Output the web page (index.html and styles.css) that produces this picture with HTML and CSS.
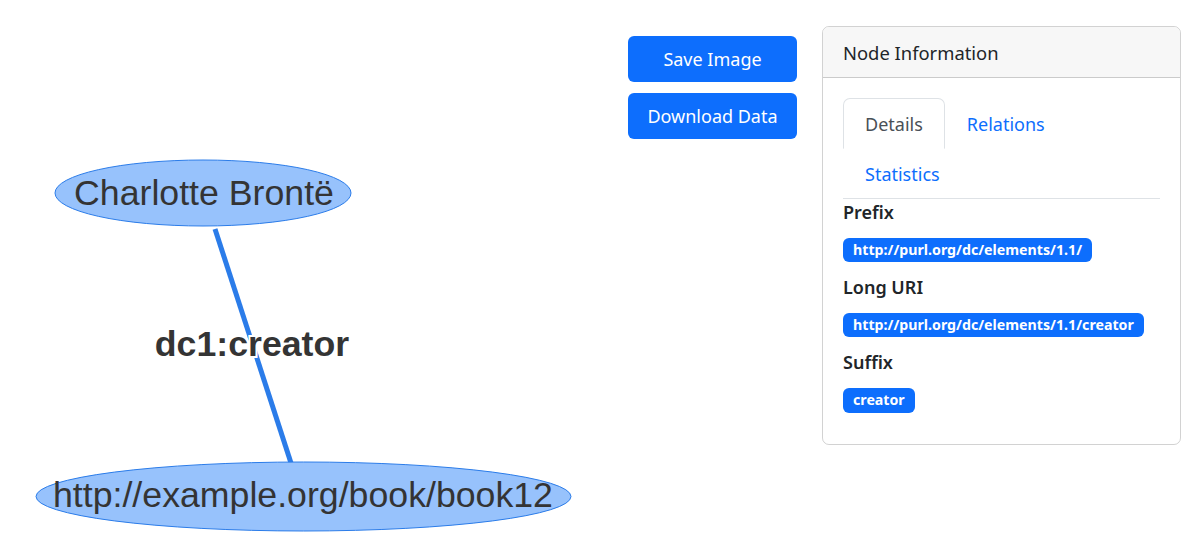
FILE: index.html
```html
<!DOCTYPE html>
<html lang="en">
<head>
<meta charset="utf-8">
<title>Node Information</title>
<link rel="stylesheet" href="styles.css">
</head>
<body>
<div class="page">
  <div class="graph">
    <svg class="graph-svg" width="620" height="558" viewBox="0 0 620 558">
      <line x1="215" y1="229" x2="291" y2="463" stroke="#2b7ce9" stroke-width="5"/>
      <text class="edge-label" x="252" y="356" text-anchor="middle">dc1:creator</text>
      <ellipse cx="203" cy="193" rx="148" ry="33" fill="#97c2fc" stroke="#2b7ce9" stroke-width="1"/>
      <text class="node-label" x="204" y="205" text-anchor="middle">Charlotte Brontë</text>
      <ellipse cx="303.5" cy="496.5" rx="267.5" ry="34.5" fill="#97c2fc" stroke="#2b7ce9" stroke-width="1"/>
      <text class="node-label" x="303" y="507" text-anchor="middle">http://example.org/book/book12</text>
    </svg>
  </div>
  <div class="actions">
    <button class="btn">Save Image</button>
    <button class="btn">Download Data</button>
  </div>
  <div class="card">
    <div class="card-header">Node Information</div>
    <div class="card-body">
      <ul class="nav-tabs">
        <li><a class="nav-link active">Details</a></li>
        <li><a class="nav-link">Relations</a></li>
        <li><a class="nav-link">Statistics</a></li>
      </ul>
      <div class="field-label">Prefix</div>
      <div class="field"><span class="badge">http://purl.org/dc/elements/1.1/</span></div>
      <div class="field-label">Long URI</div>
      <div class="field"><span class="badge">http://purl.org/dc/elements/1.1/creator</span></div>
      <div class="field-label">Suffix</div>
      <div class="field"><span class="badge">creator</span></div>
    </div>
  </div>
</div>
</body>
</html>
```

FILE: styles.css
```css
* { box-sizing: border-box; }
html, body { margin: 0; padding: 0; background: #fff; }
body {
  font-family: "Noto Sans", "Open Sans", sans-serif;
  font-size: 18px;
  line-height: 1.5;
  color: #212529;
}
.page {
  display: flex;
  align-items: flex-start;
  width: 1195px;
  height: 558px;
  overflow: hidden;
}
.graph { width: 620px; height: 558px; flex: none; }
.graph-svg { display: block; }
.node-label {
  font-family: "Liberation Sans", Arial, sans-serif;
  font-size: 35.7px;
  fill: #343434;
}
.edge-label {
  font-family: "Liberation Sans", Arial, sans-serif;
  font-size: 35.7px;
  font-weight: bold;
  fill: #343434;
  stroke: #ffffff;
  stroke-width: 4px;
  paint-order: stroke;
}
.actions {
  flex: none;
  width: 169px;
  margin-left: 8px;
  margin-top: 36px;
  display: flex;
  flex-direction: column;
  gap: 11px;
}
.btn {
  height: 46px;
  border: 0;
  border-radius: 6px;
  background: #0d6efd;
  color: #fff;
  font-family: inherit;
  font-size: 18px;
  line-height: 27px;
  padding: 1px 12px 0;
}
.card {
  flex: none;
  width: 359px;
  margin-left: 25px;
  margin-top: 26px;
  border: 1px solid rgba(0,0,0,.175);
  border-radius: 7px;
  overflow: hidden;
}
.card-header {
  background: #f7f7f7;
  border-bottom: 1px solid rgba(0,0,0,.175);
  padding: 12px 20px 11px;
  line-height: 27px;
  font-size: 18.4px;
}
.card-body { padding: 20px 20px 19px; }
.nav-tabs {
  list-style: none;
  margin: 0;
  padding: 0;
  display: flex;
  flex-wrap: wrap;
  border-bottom: 1px solid #dee2e6;
}
.nav-link {
  display: block;
  padding: 12px 21px 10px;
  line-height: 27px;
  color: #0d6efd;
  border: 1px solid transparent;
  border-top-left-radius: 7px;
  border-top-right-radius: 7px;
  margin-bottom: -1px;
}
.nav-link.active {
  color: #495057;
  border-color: #dee2e6 #dee2e6 #fff;
  background: #fff;
}
.field-label {
  font-weight: 600;
  line-height: 27px;
}
.field { margin: 12px 0 12px; line-height: 1; }
.badge {
  display: inline-block;
  background: #0d6efd;
  color: #fff;
  font-weight: 700;
  font-size: 14.2px;
  line-height: 1;
  padding: 5px 10px;
  border-radius: 6px;
  white-space: nowrap;
}
```
